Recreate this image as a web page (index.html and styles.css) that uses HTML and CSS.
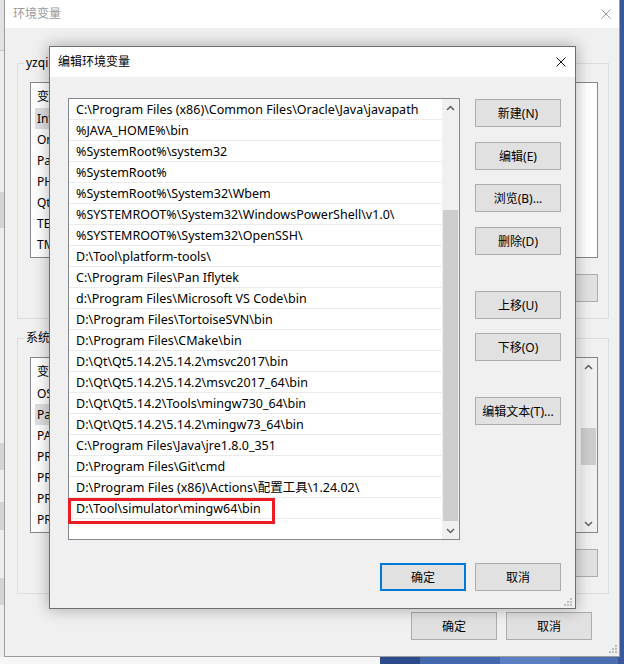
FILE: index.html
```html
<!DOCTYPE html>
<html lang="zh-CN">
<head>
<meta charset="utf-8">
<title>编辑环境变量</title>
<link rel="stylesheet" href="styles.css">
</head>
<body>
<div class="desktop">
  <div class="behind"></div>

  <section class="win back">
    <header class="titlebar back-title">
      <span class="title">环境变量</span>
      <svg class="close" width="10" height="10" viewBox="0 0 10 10"><path d="M0.5 0.5L9.5 9.5M9.5 0.5L0.5 9.5" stroke="#9a9a9a" stroke-width="1" fill="none"/></svg>
    </header>
    <div class="back-body">
      <fieldset class="group">
        <legend>yzqi 的用户变量(U)</legend>
        <div class="lv">
          <div class="lv-rows">
            <div class="lv-head">变量</div>
            <div class="lv-row sel">IntelliJ IDEA</div>
            <div class="lv-row">OneDrive</div>
            <div class="lv-row">Path</div>
            <div class="lv-row">PHPSTORM</div>
            <div class="lv-row">QtMsBuild</div>
            <div class="lv-row">TEMP</div>
            <div class="lv-row">TMP</div>
          </div>
        </div>
        <div class="btn-row">
          <button class="btn">新建(N)...</button>
          <button class="btn">编辑(E)...</button>
          <button class="btn">删除(D)</button>
        </div>
      </fieldset>
      <fieldset class="group g2">
        <legend>系统变量(S)</legend>
        <div class="lv">
          <div class="lv-rows">
            <div class="lv-head">变量</div>
            <div class="lv-row">OS</div>
            <div class="lv-row sel">Path</div>
            <div class="lv-row">PATHEXT</div>
            <div class="lv-row">PROCESSOR_ARCHITECTURE</div>
            <div class="lv-row">PROCESSOR_IDENTIFIER</div>
            <div class="lv-row">PROCESSOR_LEVEL</div>
            <div class="lv-row">PROCESSOR_REVISION</div>
          </div>
          <div class="vscroll">
            <span class="sb-btn"><svg width="9" height="6" viewBox="0 0 9 6"><path d="M1 5L4.5 1.5L8 5" stroke="#606060" stroke-width="1.5" fill="none"/></svg></span>
            <span class="sb-track back-track"><span class="sb-thumb back-thumb"></span></span>
            <span class="sb-btn"><svg width="9" height="6" viewBox="0 0 9 6"><path d="M1 1L4.5 4.5L8 1" stroke="#606060" stroke-width="1.5" fill="none"/></svg></span>
          </div>
        </div>
        <div class="btn-row">
          <button class="btn">新建(W)...</button>
          <button class="btn">编辑(I)...</button>
          <button class="btn">删除(L)</button>
        </div>
      </fieldset>
      <div class="back-foot">
        <button class="btn">确定</button>
        <button class="btn">取消</button>
      </div>
    </div>
    <svg class="grip back-grip" width="9" height="9" viewBox="0 0 9 9"><path d="M6 0h2v2h-2zM3 3h2v2h-2zM6 3h2v2h-2zM0 6h2v2h-2zM3 6h2v2h-2zM6 6h2v2h-2z" fill="#bdbdbd"/></svg>
  </section>

  <section class="win dialog">
    <header class="titlebar dlg-title">
      <span class="title">编辑环境变量</span>
      <svg class="close" width="10" height="10" viewBox="0 0 10 10"><path d="M0.5 0.5L9.5 9.5M9.5 0.5L0.5 9.5" stroke="#111" stroke-width="1" fill="none"/></svg>
    </header>
    <div class="dlg-body">
      <div class="dlg-main">
        <div class="pathlist">
          <ul class="rows">
            <li>C:\Program Files (x86)\Common Files\Oracle\Java\javapath</li>
            <li>%JAVA_HOME%\bin</li>
            <li>%SystemRoot%\system32</li>
            <li>%SystemRoot%</li>
            <li>%SystemRoot%\System32\Wbem</li>
            <li>%SYSTEMROOT%\System32\WindowsPowerShell\v1.0\</li>
            <li>%SYSTEMROOT%\System32\OpenSSH\</li>
            <li>D:\Tool\platform-tools\</li>
            <li>C:\Program Files\Pan Iflytek</li>
            <li>d:\Program Files\Microsoft VS Code\bin</li>
            <li>D:\Program Files\TortoiseSVN\bin</li>
            <li>D:\Program Files\CMake\bin</li>
            <li>D:\Qt\Qt5.14.2\5.14.2\msvc2017\bin</li>
            <li>D:\Qt\Qt5.14.2\5.14.2\msvc2017_64\bin</li>
            <li>D:\Qt\Qt5.14.2\Tools\mingw730_64\bin</li>
            <li>D:\Qt\Qt5.14.2\5.14.2\mingw73_64\bin</li>
            <li>C:\Program Files\Java\jre1.8.0_351</li>
            <li>D:\Program Files\Git\cmd</li>
            <li>D:\Program Files (x86)\Actions\配置工具\1.24.02\</li>
            <li>D:\Tool\simulator\mingw64\bin</li>
          </ul>
          <div class="vscroll">
            <span class="sb-btn"><svg width="9" height="6" viewBox="0 0 9 6"><path d="M1 5L4.5 1.5L8 5" stroke="#606060" stroke-width="1.5" fill="none"/></svg></span>
            <span class="sb-track"><span class="sb-thumb"></span></span>
            <span class="sb-btn"><svg width="9" height="6" viewBox="0 0 9 6"><path d="M1 1L4.5 4.5L8 1" stroke="#606060" stroke-width="1.5" fill="none"/></svg></span>
          </div>
          <div class="mark"></div>
        </div>
        <div class="side">
          <button class="btn">新建(N)</button>
          <button class="btn gap-l">编辑(E)</button>
          <button class="btn gap-s">浏览(B)...</button>
          <button class="btn gap-l">删除(D)</button>
          <button class="btn gap-xl">上移(U)</button>
          <button class="btn gap-s">下移(O)</button>
          <button class="btn gap-xl">编辑文本(T)...</button>
        </div>
      </div>
      <div class="dlg-foot">
        <button class="btn default">确定</button>
        <button class="btn">取消</button>
      </div>
    </div>
    <svg class="grip dlg-grip" width="9" height="9" viewBox="0 0 9 9"><path d="M6 0h2v2h-2zM3 3h2v2h-2zM6 3h2v2h-2zM0 6h2v2h-2zM3 6h2v2h-2zM6 6h2v2h-2z" fill="#bdbdbd"/></svg>
  </section>
</div>
</body>
</html>
```

FILE: styles.css
```css
* { box-sizing: border-box; }
html, body { margin: 0; padding: 0; }
body {
  width: 624px;
  height: 664px;
  overflow: hidden;
  font-family: "Noto Sans", "Noto Sans CJK SC", sans-serif;
  font-size: 12px;
  color: #000;
}
.desktop {
  position: relative;
  width: 624px;
  height: 664px;
  overflow: hidden;
  background: linear-gradient(90deg, #2d4b8b 0 420px, #4368ad 420px 500px, #5a7fc2 500px 560px, #4b6db2 560px 618px, #38589b 618px);
}
.behind {
  position: absolute;
  left: 0;
  top: 0;
  width: 380px;
  height: 664px;
  background: linear-gradient(to bottom,
    #e2e2e2 0 50px, #c9c9c9 50px 51px, #ededed 51px 192px,
    #d4d4d4 192px 228px, #ededed 228px 443px, #d4d4d4 443px 470px,
    #ededed 470px 502px, #d4d4d4 502px 530px, #ededed 530px 578px,
    #d4d4d4 578px 605px, #ededed 605px 657px, #f6f6f6 657px);
}
.win { position: absolute; }
.titlebar {
  display: flex;
  align-items: center;
  justify-content: space-between;
  background: #fff;
  flex: none;
}
.title { font-size: 12px; line-height: 16px; }
.close { display: block; }

/* background window */
.back {
  left: 4px;
  top: 0;
  width: 616px;
  height: 657px;
  border: 1px solid #9c9c9c;
  border-top: 0;
  background: #f0f0f0;
  display: flex;
  flex-direction: column;
}
.back-title { height: 28px; padding: 0 8px; color: #9a9a9a; }
.back-body {
  flex: 1;
  padding: 27px 10px 0 12px;
  display: flex;
  flex-direction: column;
}
.group {
  margin: 0;
  min-width: 0;
  border: 1px solid #dcdcdc;
  padding: 11px 10px 16px 12px;
}
.group legend {
  padding: 0 2px;
  margin-left: -6px;
  line-height: 16px;
  font-size: 12px;
}
.g2 { margin-top: 11px; }
.lv {
  height: 176px;
  background: #fff;
  border: 1px solid #828790;
  display: flex;
  overflow: hidden;
}
.lv-rows { flex: 1; }
.lv-head { height: 25px; padding: 3px 0 0 6px; line-height: 22px; }
.lv-row { height: 21px; line-height: 21px; padding-left: 6px; white-space: nowrap; }
.lv-row.sel { background: #dedede; margin-left: 4px; padding-left: 2px; width: 170px; }
.btn-row {
  display: flex;
  justify-content: flex-end;
  gap: 9px;
  margin-top: 16px;
}
.back-foot {
  display: flex;
  justify-content: flex-end;
  gap: 9px;
  margin-top: 18px;
  padding-right: 17px;
}
.btn {
  width: 86px;
  height: 28px;
  padding: 0;
  margin: 0;
  border: 1px solid #adadad;
  background: #e1e1e1;
  font-family: "Noto Sans", "Noto Sans CJK SC", sans-serif;
  font-size: 12px;
  color: #000;
  white-space: nowrap;
}
.grip { position: absolute; display: block; }
.back-grip { right: 1px; bottom: 2px; }

/* scrollbars */
.vscroll {
  width: 17px;
  flex: none;
  background: #f0f0f0;
  display: flex;
  flex-direction: column;
}
.sb-btn {
  height: 17px;
  flex: none;
  display: flex;
  align-items: center;
  justify-content: center;
}
.sb-btn svg { display: block; }
.sb-track { flex: 1; padding: 94px 1px 0; }
.sb-thumb { display: block; height: 311px; background: #cdcdcd; }
.back-track { padding-top: 53px; }
.back-thumb { height: 37px; }

/* foreground dialog */
.dialog {
  left: 49px;
  top: 46px;
  width: 527px;
  height: 563px;
  border: 1px solid #6f6f6f;
  background: #f0f0f0;
  box-shadow: 0 0 14px 1px rgba(0, 0, 0, 0.28);
  display: flex;
  flex-direction: column;
}
.dlg-title { height: 30px; padding: 0 9px 0 8px; }
.dlg-body { padding: 21px 14px 17px 18px; }
.dlg-main { display: flex; gap: 15px; align-items: flex-start; }
.pathlist {
  position: relative;
  width: 392px;
  height: 442px;
  flex: none;
  border: 1px solid #828790;
  background: #fff;
  display: flex;
}
.rows { flex: 1; list-style: none; margin: 0; padding: 0; }
.rows li {
  height: 21px;
  line-height: 22px;
  border-bottom: 1px solid #ebebeb;
  padding-left: 7px;
  white-space: nowrap;
  font-size: 12.5px;
}
.mark {
  position: absolute;
  left: -1px;
  top: 399px;
  width: 207px;
  height: 26px;
  border: 3px solid #ec1c24;
}
.side { width: 86px; display: flex; flex-direction: column; padding-top: 1px; }
.gap-l { margin-top: 15px; }
.gap-s { margin-top: 14px; }
.gap-xl { margin-top: 36px; }
.dlg-foot {
  display: flex;
  justify-content: flex-end;
  gap: 9px;
  margin-top: 23px;
}
.btn.default { border: 2px solid #0078d7; }
.dlg-grip { right: 2px; bottom: 1px; }
```
